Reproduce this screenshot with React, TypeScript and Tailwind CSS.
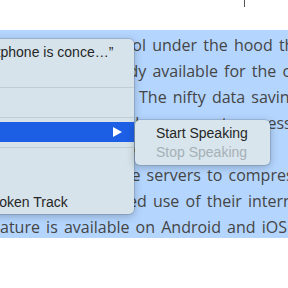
import React from 'react';

const lines: { left: string; leftWidth: number; right: string }[] = [
  { left: 'lets Google media compression\u00a0', leftWidth: 117, right: 'tool under the hood that' },
  { left: 'The new setting is al', leftWidth: 104, right: 'ready available for the company' },
  { left: 'mobile browser app.\u00a0', leftWidth: 139, right: 'The nifty data saving' },
  { left: 'feature basically allows\u00a0', leftWidth: 175, right: 'users to access' },
  { left: 'Chrome to make use of\u00a0', leftWidth: 122, right: "Google's proxy" },
  { left: 'Chrome to\u00a0', leftWidth: 114, right: 'use servers to compress' },
  { left: 'pages for users with limit', leftWidth: 128, right: 'ed use of their internet' },
  { left: 'fe', leftWidth: 0, right: 'ature is available on Android and iOS' },
];

const menuItems = [
  'Look Up “If your smartphone is conce…”',
  'Search with Google',
  '-',
  'Copy',
  '-',
  'Speech',
  '-',
  'Inspect Element',
  'Show Info',
  'Add to iTunes as a Spoken Track',
];

const App: React.FC = () => {
  return (
    <div className="relative w-[288px] h-[288px] overflow-hidden bg-white">
      {/* Caret at top */}
      <div className="absolute left-[244px] top-0 w-px h-[7px] bg-[#555]"></div>

      {/* Selected paragraph */}
      <div className="mt-[30px] h-[208px] pt-[2px] overflow-hidden bg-[#b4d5fe] font-['Open_Sans',sans-serif] text-[16px] text-[#454545]">
        {lines.map((line, index) => (
          <div key={index} className="flex h-[26px] leading-[26px] whitespace-nowrap [word-spacing:2px]">
            <div className="flex justify-end overflow-hidden shrink-0" style={{ width: line.leftWidth }}>
              <span className="shrink-0">{line.left}</span>
            </div>
            <span className="shrink-0">{line.right}</span>
          </div>
        ))}
      </div>

      {/* Context menu */}
      <div className="absolute left-[-160px] top-[39px] w-[294px] pt-[3px] pb-[2px] bg-[#d6e3eb] rounded-[5px] shadow-[0_2px_8px_rgba(0,0,0,0.25)] ring-1 ring-black/10 font-['Liberation_Sans',Arial,sans-serif] text-[14px] text-[#262626]">
        {menuItems.map((item, index) =>
          item === '-' ? (
            <div key={index} className="h-[10px] flex items-center">
              <div className="w-full h-px bg-[#c2ccd2]"></div>
            </div>
          ) : item === 'Speech' ? (
            <div key={index} className="flex items-center justify-between h-[20px] pl-[22px] pr-[12px] bg-[#1c5fe5] text-white">
              <span className="whitespace-nowrap">{item}</span>
              <svg width="9" height="10" viewBox="0 0 9 10">
                <polygon points="0,0 9,5 0,10" fill="#ffffff" />
              </svg>
            </div>
          ) : (
            <div key={index} className="flex items-center h-[20px] pl-[22px] whitespace-nowrap">
              {item}
            </div>
          )
        )}
      </div>

      {/* Speech submenu */}
      <div className="absolute left-[135px] top-[120px] w-[135px] pt-[4px] pb-[3px] bg-[#d8e5ec] rounded-[5px] shadow-[0_2px_8px_rgba(0,0,0,0.25)] ring-1 ring-black/10 font-['Liberation_Sans',Arial,sans-serif] text-[14px]">
        <div className="flex items-center h-[19px] pl-[21px] text-[#262626] whitespace-nowrap">Start Speaking</div>
        <div className="flex items-center h-[19px] pl-[21px] text-[#a6b0b6] whitespace-nowrap">Stop Speaking</div>
      </div>
    </div>
  );
};

export default App;
